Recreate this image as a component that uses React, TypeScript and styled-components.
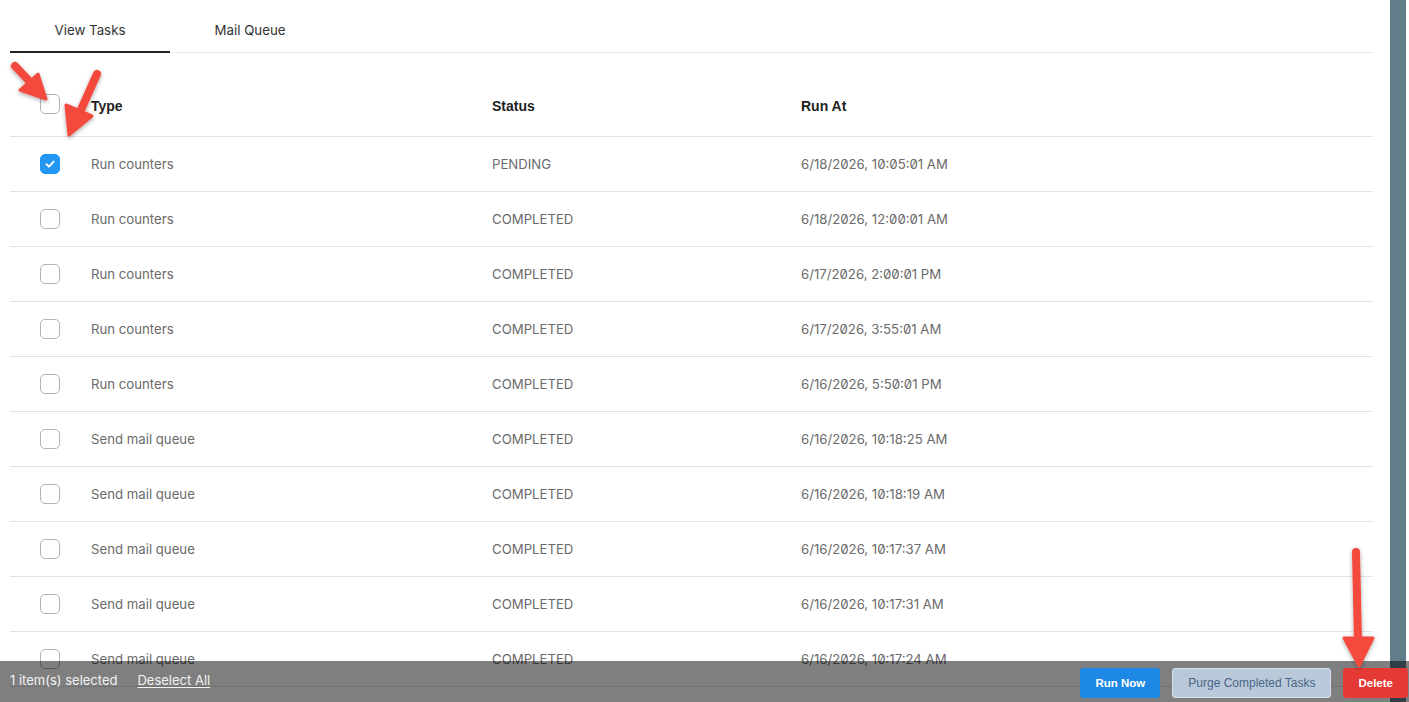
import styled, {createGlobalStyle} from "styled-components";

interface ITask {
    id: number,
    type: string,
    status: string,
    runAt: string,
    selected: boolean
}

const tasks: ITask[] = [
    {id: 1, type: "Run counters", status: "PENDING", runAt: "6/18/2026, 10:05:01 AM", selected: true},
    {id: 2, type: "Run counters", status: "COMPLETED", runAt: "6/18/2026, 12:00:01 AM", selected: false},
    {id: 3, type: "Run counters", status: "COMPLETED", runAt: "6/17/2026, 2:00:01 PM", selected: false},
    {id: 4, type: "Run counters", status: "COMPLETED", runAt: "6/17/2026, 3:55:01 AM", selected: false},
    {id: 5, type: "Run counters", status: "COMPLETED", runAt: "6/16/2026, 5:50:01 PM", selected: false},
    {id: 6, type: "Send mail queue", status: "COMPLETED", runAt: "6/16/2026, 10:18:25 AM", selected: false},
    {id: 7, type: "Send mail queue", status: "COMPLETED", runAt: "6/16/2026, 10:18:19 AM", selected: false},
    {id: 8, type: "Send mail queue", status: "COMPLETED", runAt: "6/16/2026, 10:17:37 AM", selected: false},
    {id: 9, type: "Send mail queue", status: "COMPLETED", runAt: "6/16/2026, 10:17:31 AM", selected: false},
    {id: 10, type: "Send mail queue", status: "COMPLETED", runAt: "6/16/2026, 10:17:24 AM", selected: false}
];

function CheckBox({checked}: {checked: boolean}) {
    return (
        <Box $checked={checked}>
            {checked && (
                <svg width="12" height="12" viewBox="0 0 12 12">
                    <path d="M2.5 6.2 L5 8.6 L9.6 3.6" fill="none" stroke="#fff" strokeWidth="1.9"
                          strokeLinecap="round" strokeLinejoin="round"/>
                </svg>
            )}
        </Box>
    );
}

// red annotation arrows drawn on top of the screenshot
function Arrows() {
    return (
        <Overlay width="1409" height="702" viewBox="0 0 1409 702">
            <defs>
                <filter id="shadow" x="-50%" y="-50%" width="200%" height="200%">
                    <feDropShadow dx="0" dy="1.5" stdDeviation="2" floodColor="#000" floodOpacity="0.35"/>
                </filter>
            </defs>
            <g fill="#f4493d" stroke="#f4493d" strokeLinecap="round" strokeLinejoin="round" filter="url(#shadow)">
                <line x1="15" y1="66" x2="34" y2="86" strokeWidth="8"/>
                <polygon points="46,99 20,90 38,74" strokeWidth="3"/>

                <line x1="97" y1="74" x2="80" y2="112" strokeWidth="8"/>
                <polygon points="69,135 66,105 92,116" strokeWidth="3"/>

                <line x1="1356" y1="552" x2="1358" y2="642" strokeWidth="8"/>
                <polygon points="1359,666 1344,638 1373,638" strokeWidth="3"/>
            </g>
        </Overlay>
    );
}

export default function App() {
    return (
        <>
            <GlobalStyle/>
            <Page>
                <Main>
                    <Tabs>
                        <Tab $active>View Tasks</Tab>
                        <Tab>Mail Queue</Tab>
                    </Tabs>

                    <HeaderRow>
                        <CheckCell $header><CheckBox checked={false}/></CheckCell>
                        <HeadCell>Type</HeadCell>
                        <HeadCell>Status</HeadCell>
                        <HeadCell>Run At</HeadCell>
                    </HeaderRow>

                    {tasks.map((task) => (
                        <Row key={task.id}>
                            <CheckCell><CheckBox checked={task.selected}/></CheckCell>
                            <Cell>{task.type}</Cell>
                            <Cell>{task.status}</Cell>
                            <Cell>{task.runAt}</Cell>
                        </Row>
                    ))}
                </Main>
                <ScrollRail/>

                <ActionBar>
                    <Selection>
                        <span>1 item(s) selected</span>
                        <TextLink>Deselect All</TextLink>
                    </Selection>
                    <Actions>
                        <Button $variant="primary">Run Now</Button>
                        <Button $variant="muted">Purge Completed Tasks</Button>
                        <Button $variant="danger">Delete</Button>
                    </Actions>
                </ActionBar>

                <Arrows/>
            </Page>
        </>
    );
}

const GlobalStyle = createGlobalStyle`
    html, body {
        margin: 0;
        padding: 0;
        background: #fff;
    }
    body {
        font-family: Inter, "Noto Sans", sans-serif;
        font-feature-settings: "zero" 1;
    }
`;

const Page = styled.div`
    position: relative;
    display: flex;
    height: 702px;
    overflow: hidden;
    background: #fff;
`;

const Main = styled.main`
    flex: 1;
    padding: 0 17px 0 10px;
    display: flex;
    flex-direction: column;
`;

const ScrollRail = styled.div`
    width: 16px;
    margin-right: 3px;
    background: #617d8a;
    flex-shrink: 0;
`;

const Tabs = styled.nav`
    display: flex;
    height: 53px;
    border-bottom: 1px solid #ececec;
    box-sizing: border-box;
    flex-shrink: 0;
`;

const Tab = styled.div<{ $active?: boolean }>`
    width: 160px;
    display: flex;
    align-items: center;
    justify-content: center;
    padding-top: 8px;
    box-sizing: border-box;
    font-size: 13.3px;
    color: #333;
    border-bottom: 2px solid ${(p) => (p.$active ? "#222" : "transparent")};
    margin-bottom: -1px;
`;

const gridColumns = `
    display: grid;
    grid-template-columns: 81px 401px 309px 1fr;
    align-items: center;
    border-bottom: 1px solid #e2e2e2;
    box-sizing: border-box;
    flex-shrink: 0;
`;

const HeaderRow = styled.div`
    ${gridColumns};
    height: 84px;
    padding-top: 22px;
`;

const Row = styled.div`
    ${gridColumns};
    height: 55px;
`;

const CheckCell = styled.div<{ $header?: boolean }>`
    display: flex;
    padding-left: 30px;
    margin-bottom: ${(p) => (p.$header ? "4px" : "0")};
`;

const Box = styled.span<{ $checked: boolean }>`
    width: 20px;
    height: 20px;
    box-sizing: border-box;
    border-radius: 5px;
    border: 1px solid ${(p) => (p.$checked ? "#2196f3" : "#aeb6bd")};
    background: ${(p) => (p.$checked ? "#2196f3" : "#fff")};
    display: flex;
    align-items: center;
    justify-content: center;
`;

const HeadCell = styled.div`
    font-family: "Liberation Sans", Arial, sans-serif;
    font-weight: bold;
    font-size: 14px;
    color: #1f1f1f;
`;

const Cell = styled.div`
    font-size: 13.2px;
    color: #6a6a6a;
`;

const ActionBar = styled.div`
    position: absolute;
    left: 0;
    right: 0;
    bottom: 0;
    height: 41px;
    background: rgba(0, 0, 0, 0.5);
    display: flex;
    align-items: flex-end;
    justify-content: space-between;
    padding: 0 1px 4px 10px;
    box-sizing: border-box;
`;

const Selection = styled.div`
    display: flex;
    gap: 20px;
    align-self: center;
    font-size: 13px;
    color: #f2f2f2;
`;

const TextLink = styled.span`
    text-decoration: underline;
    text-underline-offset: 2px;
`;

const Actions = styled.div`
    display: flex;
    gap: 12px;
`;

const buttonColors = {
    primary: {bg: "#1e88e5", fg: "#fff", border: "#1e88e5"},
    muted: {bg: "#b9c9d9", fg: "#4a6688", border: "#d4dfe9"},
    danger: {bg: "#e53935", fg: "#fff", border: "#e53935"}
};

const Button = styled.button<{ $variant: keyof typeof buttonColors }>`
    height: 30px;
    padding: 0 ${(p) => (p.$variant === "muted" ? "15px" : "14px")};
    border-radius: 3px;
    border: 1px solid ${(p) => buttonColors[p.$variant].border};
    background: ${(p) => buttonColors[p.$variant].bg};
    color: ${(p) => buttonColors[p.$variant].fg};
    font-family: "Liberation Sans", Arial, sans-serif;
    font-weight: ${(p) => (p.$variant === "muted" ? "normal" : "bold")};
    font-size: ${(p) => (p.$variant === "muted" ? "12px" : "11.5px")};
`;

const Overlay = styled.svg`
    position: absolute;
    top: 0;
    left: 0;
    pointer-events: none;
`;
